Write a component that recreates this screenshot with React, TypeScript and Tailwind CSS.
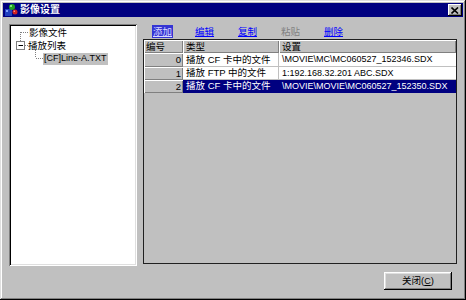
const font = "font-['Liberation_Sans','Noto_Sans_CJK_SC',sans-serif]";

const rows = [
  { n: 0, type: "播放 CF 卡中的文件", path: "\\MOVIE\\MC\\MC060527_152346.SDX", h: "h-[14px]" },
  { n: 1, type: "播放 FTP 中的文件", path: "1:192.168.32.201 ABC.SDX", h: "h-[13px]" },
  { n: 2, type: "播放 CF 卡中的文件", path: "\\MOVIE\\MOVIE\\MC060527_152350.SDX", h: "h-[13px]", sel: true },
];

function TitleIcon() {
  return (
    <svg width="14" height="14" viewBox="0 0 14 14">
      <rect x="1" y="6" width="7" height="7" fill="#2040c0" />
      <rect x="2" y="7" width="2" height="2" fill="#80a0ff" />
      <circle cx="8" cy="4" r="3" fill="#20a020" />
      <circle cx="7" cy="3" r="1" fill="#a0ffa0" />
      <circle cx="11" cy="9" r="2.5" fill="#d02020" />
      <circle cx="10.3" cy="8.3" r="0.8" fill="#ffa0a0" />
    </svg>
  );
}

function TreeLines() {
  return (
    <svg className="absolute left-0 top-0" width="60" height="40" viewBox="0 0 60 40">
      <g stroke="#808080" strokeWidth="1" strokeDasharray="1 1" fill="none">
        <path d="M11.5 8 V17" />
        <path d="M12 8.5 H19" />
        <path d="M16 21.5 H20" />
        <path d="M26.5 26 V34" />
        <path d="M27 34.5 H34" />
      </g>
      <rect x="7.5" y="17.5" width="8" height="8" fill="#fff" stroke="#808080" />
      <path d="M9.5 21.5 H14" stroke="#000" />
    </svg>
  );
}

export default function App() {
  return (
    <div className={`${font} w-[466px] h-[300px] bg-[#c0c0c0] p-[3px] flex flex-col shadow-[inset_-1px_-1px_#000,inset_1px_1px_#dfdfdf,inset_-2px_-2px_#808080,inset_2px_2px_#fff]`}>
      {/* Title bar */}
      <div className="h-[14px] bg-[#000080] flex items-center pl-[1px] pr-[1px]">
        <TitleIcon />
        <span className="ml-[2px] text-white text-[10px] font-bold leading-none">影像设置</span>
        <div className="ml-auto w-[14px] h-[12px] bg-[#c0c0c0] flex items-center justify-center shadow-[inset_-1px_-1px_#000,inset_1px_1px_#fff,inset_-2px_-2px_#808080]">
          <svg width="8" height="7" viewBox="0 0 8 7">
            <path d="M0.5 0.5 L7 6.5 M7 0.5 L0.5 6.5" stroke="#000" strokeWidth="1.6" />
          </svg>
        </div>
      </div>

      {/* Body */}
      <div className="flex flex-col pl-[6px] pr-[6px] pt-[7px]">
        <div className="flex items-start gap-[6px]">
          {/* Tree */}
          <div className="relative w-[128px] h-[242px] bg-white shadow-[inset_1px_1px_#808080,inset_-1px_-1px_#fff,inset_2px_2px_#000,inset_-2px_-2px_#dfdfdf] pt-[2px]">
            <TreeLines />
            <div className="h-[13px] flex items-center pl-[20px] text-[9.5px] leading-none">影像文件</div>
            <div className="h-[13px] flex items-center pl-[19px] text-[9.5px] leading-none">播放列表</div>
            <div className="h-[13px] flex items-center pl-[34px]">
              <span className="h-[12px] bg-[#c0c0c0] px-[1px] flex items-center text-[9px] leading-none">[CF]Line-A.TXT</span>
            </div>
          </div>

          {/* Right side */}
          <div className="w-[314px] flex flex-col">
            <div className="h-[15px] flex items-center pl-[9px] text-[9.5px] leading-none">
              <div className="w-[43px]">
                <span className="bg-[#3434d4] text-[#d8d8ff] underline px-[1px] py-[1px]">添加</span>
              </div>
              <div className="w-[43px]"><span className="text-[#0000ff] underline">编辑</span></div>
              <div className="w-[43px]"><span className="text-[#0000ff] underline">复制</span></div>
              <div className="w-[43px]"><span className="text-[#808080]">粘贴</span></div>
              <div className="w-[43px]"><span className="text-[#0000ff] underline">删除</span></div>
            </div>

            {/* Grid */}
            <div className="h-[225px] border border-[#202020] bg-[#c0c0c0] flex flex-col">
              <div className="h-[13px] flex text-[9.5px] leading-none">
                <div className="w-[39px] flex items-center pl-[2px] shadow-[inset_1px_1px_#fff,inset_-1px_-1px_#808080]">编号</div>
                <div className="w-[96px] flex items-center pl-[3px] shadow-[inset_1px_1px_#fff,inset_-1px_-1px_#808080]">类型</div>
                <div className="flex-1 flex items-center pl-[3px] shadow-[inset_1px_1px_#fff,inset_-1px_-1px_#808080]">设置</div>
              </div>
              {rows.map((r) => (
                <div key={r.n} className={`${r.h} flex leading-none`}>
                  <div className="w-[39px] flex items-center justify-end pr-[2px] text-[9.5px] shadow-[inset_1px_1px_#fff,inset_-1px_-1px_#808080]">
                    {r.n}
                  </div>
                  <div
                    className={`w-[96px] flex items-center pl-[3px] text-[9.5px] border-r border-b ${
                      r.sel ? "bg-[#000080] text-white border-[#000080]" : "bg-white border-[#c0c0c0]"
                    }`}
                  >
                    {r.type}
                  </div>
                  <div
                    className={`flex-1 flex items-center pl-[3px] text-[9px] border-b ${
                      r.sel ? "bg-[#000080] text-white border-[#000080]" : "bg-white border-[#c0c0c0]"
                    }`}
                  >
                    {r.path}
                  </div>
                </div>
              ))}
            </div>
          </div>
        </div>

        {/* Button row */}
        <div className="flex justify-end mt-[6px] pr-[5px]">
          <div className="w-[68px] h-[18px] flex items-center justify-center bg-[#c0c0c0] shadow-[inset_-1px_-1px_#000,inset_1px_1px_#fff,inset_-2px_-2px_#808080,inset_2px_2px_#dfdfdf] text-[9.5px] leading-none">
            <span>关闭(</span>
            <span className="underline text-[9px]">C</span>
            <span>)</span>
          </div>
        </div>
      </div>
    </div>
  );
}
